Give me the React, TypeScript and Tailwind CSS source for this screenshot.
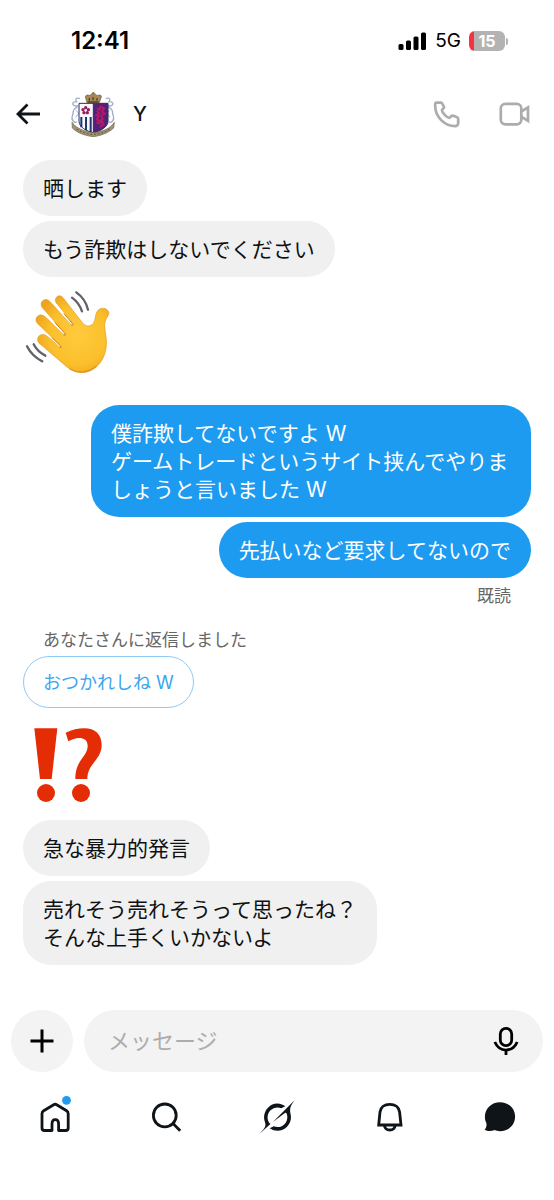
import React from "react";

type Message = { lines: string[] };

const received: Message[] = [
  { lines: ["晒します"] },
  { lines: ["もう詐欺はしないでください"] },
];

const sent: Message[] = [
  { lines: ["僕詐欺してないですよ W", "ゲームトレードというサイト挟んでやりましょうと言いました W"] },
  { lines: ["先払いなど要求してないので"] },
];

const latest: Message[] = [
  { lines: ["急な暴力的発言"] },
  { lines: ["売れそう売れそうって思ったね？", "そんな上手くいかないよ"] },
];

function Bubble({ message, own = false }: { message: Message; own?: boolean }) {
  const tone = own ? "self-end bg-[#1d9bf0] text-white" : "self-start bg-[#f0f0f0] text-[#0f1012]";
  return (
    <div className={`max-w-[440px] rounded-[28px] px-5 pt-[15px] pb-[13px] text-[21px] leading-7 ${tone}`}>
      {message.lines.map((line) => (
        <p key={line}>{line}</p>
      ))}
    </div>
  );
}

function StatusBar() {
  return (
    <div className="flex h-[82px] items-center justify-between pl-[71px] pr-[46px]">
      <time className="text-2xl font-semibold text-black">12:41</time>
      <div className="flex items-center">
        <svg className="mr-2 h-[18px] w-[29px]" viewBox="0 0 29 18" aria-label="電波">
          <rect x="0.5" y="12" width="5" height="6" rx="1.5" />
          <rect x="8" y="8.500" width="5" height="9.500" rx="1.500" />
          <rect x="15.500" y="4.500" width="5" height="13.500" rx="1.500" />
          <rect x="23" y="0.500" width="5" height="17.500" rx="1.500" />
        </svg>
        <span className="mr-2 text-[19px] leading-6 text-black">5G</span>
        <div className="flex items-center">
          <div className="flex h-5 w-9 items-center justify-center rounded-md bg-linear-to-r from-[#f8323c] from-15% to-[#b3b3b3] to-15% text-base font-bold leading-5 text-white">
            15
          </div>
          <span className="ml-px h-[7px] w-[2px] rounded-r-full bg-[#b3b3b3]" />
        </div>
      </div>
    </div>
  );
}

function Crest() {
  return (
    <svg className="h-[46px] w-[46px]" viewBox="32 32 138 138" role="img" aria-label="プロフィール画像">
      <g fill="none" stroke="#a3afc6" strokeWidth="4">
        <path d="M62 55C46 49 48 62 54 65C42 61 35 72 45 76C52 80 58 70 52 82C37 87 44 97 39 107C35 117 43 129 53 125" />
        <path d="M139 55C155 49 153 62 147 65C159 61 166 72 156 76C149 80 143 70 149 82C164 87 157 97 162 107C166 117 158 129 148 125" />
        <path d="M50 90l8 9-9 12M151 90l-8 9 9 12" strokeWidth="3" />
      </g>
      <path d="M59 69H102V157C80 151 59 141 59 122Z" fill="#f7f7fc" />
      <path d="M102 69H146V122C146 141 123 152 102 157Z" fill="#562078" />
      <path d="M66 110v31M80 110v40M94 110v45" stroke="#22376a" strokeWidth="6" />
      <path d="M59 69H146V122C146 141 123 152 102 157C81 152 59 141 59 122Z" fill="none" stroke="#252e66" strokeWidth="3" />
      <path d="M102 69V155" stroke="#342c69" strokeWidth="3" />
      <g fill="#9d175d">
        <circle cx="79" cy="82" r="5" /><circle cx="87" cy="88" r="5" />
        <circle cx="84" cy="97" r="5" /><circle cx="74" cy="97" r="5" />
        <circle cx="71" cy="88" r="5" />
      </g>
      <circle cx="79" cy="90" r="3" fill="#ece4ed" />
      <path d="M113 83l8 5 3-9 10 5-6 10 8 6-10 6 4 10-10 6-7-5 5-9-7-3 9-6-8-8M111 126l9 3 9-5 4 7-11 9" fill="none" stroke="#b71965" strokeWidth="6" />
      <path d="M83 67L78 50C79 43 87 43 92 46C93 38 110 38 113 46C119 43 127 43 126 50L120 67Z" fill="#a78a58" stroke="#70593c" strokeWidth="2" />
      <path d="M90 53v8M101 50v10M113 53v8M85 65H118" stroke="#51422e" strokeWidth="4" />
      <circle cx="102" cy="39" r="4" fill="#93764a" />
      <path d="M38 126C46 139 66 149 81 153C95 158 110 158 123 153C141 149 157 139 165 126L163 143C144 160 123 166 102 169C77 166 54 158 39 143Z" fill="#a3946e" stroke="#67604d" strokeWidth="2" />
      <path d="M52 146C71 158 86 162 102 162C119 162 137 156 151 146" fill="none" stroke="#5b543f" strokeWidth="3" strokeDasharray="6 5" />
    </svg>
  );
}

function Header() {
  return (
    <header className="flex h-16 items-center pl-4 pr-6">
      <button type="button" aria-label="戻る" className="mr-[30px]">
        <svg className="h-6 w-6" viewBox="0 0 24 24" fill="none" stroke="#0f1419" strokeWidth="2.8">
          <path d="M24 12H2.500M11.500 2.500L2 12L11.500 21.500" />
        </svg>
      </button>
      <Crest />
      <h1 className="ml-[17px] flex-1 text-xl font-medium leading-7 text-[#0f1419]">Y</h1>
      <button type="button" aria-label="音声通話" className="mr-[39px]">
        <svg className="h-[27px] w-[27px]" viewBox="0 0 27 27" fill="none" stroke="#acacac" strokeWidth="2.7" strokeLinejoin="round">
          <path d="M3.600 1.600H8.300C9 1.600 11.100 5.800 11.100 6.500C11.100 7.200 8.900 8.300 8.900 9C8.900 11.600 14.100 16.800 16.400 16.800C17.300 16.800 18 14.600 18.900 14.600C20.100 14.600 25.200 16.200 25.200 17.400V22C25.200 23.800 23.900 25.200 22.200 25.200C11.600 25.200 2.200 15.700 2.200 5V3.200C2.200 2.300 2.800 1.600 3.600 1.600Z" />
        </svg>
      </button>
      <button type="button" aria-label="ビデオ通話">
        <svg className="h-6 w-[31px]" viewBox="0 0 31 24" fill="none" stroke="#acacac" strokeWidth="2.7">
          <rect x="1.800" y="1.800" width="20.500" height="20.500" rx="4.500" />
          <path d="M22.500 9.300L29 5.300V18.800L22.500 14.800" />
        </svg>
      </button>
    </header>
  );
}

function WavingHand() {
  return (
    <svg className="mt-[13px] h-[84px] w-[90px]" viewBox="24 30 270 252" role="img" aria-label="手を振る">
      <defs>
        <radialGradient id="skin" gradientUnits="userSpaceOnUse" cx="190" cy="165" r="135">
          <stop offset="0" stopColor="#ffcb3c" />
          <stop offset="0.650" stopColor="#fbbf2c" />
          <stop offset="1" stopColor="#eda41d" />
        </radialGradient>
      </defs>
      <path
        d="M144 53L202 128C212 140 225 142 235 130C243 118 239 104 248 92C258 81 274 83 281 95C284 104 275 111 271 123C266 139 272 154 274 178C277 210 265 245 241 263C217 283 182 283 157 262L73 190C63 180 69 165 80 164C91 160 103 174 136 203C140 204 140 200 137 197L67 130C57 118 67 103 80 105C92 106 114 136 147 165C151 166 153 163 150 159L82 83C73 71 82 57 96 59C107 61 134 101 170 135C174 137 177 134 174 130L124 69C114 55 132 39 144 53Z"
        fill="url(#skin)"
        stroke="#e39a22"
        strokeWidth="2"
        strokeLinejoin="round"
      />
      <g fill="none" stroke="#d17f16" strokeWidth="3" strokeLinecap="round">
        <path d="M147 101L174 133Q175 137 170 135" />
        <path d="M120 128L150 161Q153 167 147 165" />
        <path d="M112 174L137 198Q140 204 135 203" />
        <path d="M164 267Q205 290 245 258" strokeWidth="2" />
      </g>
      <g fill="none" stroke="#626368" strokeWidth="7" strokeLinecap="round">
        <path d="M171 53Q192 68 201 94M184 37Q212 57 219 89M56 193Q67 215 91 227M36 199Q51 229 82 244" />
      </g>
    </svg>
  );
}

function Interrobang() {
  return (
    <svg className="mt-5 h-[75px] w-[90px]" viewBox="69 324 270 225" fill="#e42c05" role="img" aria-label="⁉️">
      <path d="M103 325H172L155 477H120Z" />
      <circle cx="138" cy="519" r="27" />
      <path d="M197 338C216 329 235 325 253 325C285 325 305 343 305 375C305 420 262 430 262 477H226C226 418 263 411 263 378C263 360 251 354 238 354C226 354 216 358 205 364Z" />
      <circle cx="243" cy="519" r="27" />
    </svg>
  );
}

function Composer() {
  return (
    <form className="flex h-[62px] gap-[11px] px-[11px]" onSubmit={(event) => event.preventDefault()}>
      <button type="button" aria-label="添付" className="flex w-[62px] shrink-0 items-center justify-center rounded-full bg-[#f3f3f3]">
        <svg className="h-6 w-6" viewBox="0 0 24 24" stroke="#000" strokeWidth="3">
          <path d="M12 0.500V23.500M0.500 12H23.500" />
        </svg>
      </button>
      <div className="flex min-w-0 flex-1 items-center rounded-full bg-[#f3f3f3] px-6">
        <input
          type="text"
          aria-label="メッセージ"
          placeholder="メッセージ"
          className="min-w-0 flex-1 bg-transparent text-[22px] leading-8 text-black outline-none placeholder:text-[#adadad]"
        />
        <button type="button" aria-label="音声入力">
          <svg className="h-[30px] w-[26px]" viewBox="0 0 26 30" fill="none" stroke="#000" strokeWidth="2.8">
            <rect x="7.300" y="2.400" width="11.400" height="17.200" rx="5.700" />
            <path d="M1.800 16C6.500 26.700 19.500 26.700 24.200 16M13 24V29" />
          </svg>
        </button>
      </div>
    </form>
  );
}

function Navigation() {
  const item = "flex items-center justify-center";
  return (
    <nav className="mt-[27px] grid grid-cols-5">
      <a href="#home" aria-label="ホーム" className={item}>
        <svg className="h-9 w-9 overflow-visible" viewBox="0 0 36 36" fill="none">
          <path d="M7.500 31.500H15V25C15 19.200 21.600 19.200 21.600 25V31.500H28.700C30.200 31.500 31.200 30.500 31.200 29V14.800C31.200 13.500 30.700 12.500 29.600 11.800L19.700 5.700C18.700 5.100 17.700 5.100 16.700 5.700L6.700 11.800C5.600 12.500 5 13.500 5 14.800V29C5 30.500 6 31.500 7.500 31.500Z" stroke="#0f1419" strokeWidth="2.800" strokeLinejoin="round" />
          <circle cx="29.500" cy="1.300" r="4.400" fill="#1d9bf0" />
        </svg>
      </a>
      <a href="#search" aria-label="検索" className={item}>
        <svg className="h-9 w-9" viewBox="0 0 36 36" fill="none" stroke="#0f1419" strokeWidth="2.800">
          <circle cx="16.800" cy="16.400" r="11.400" />
          <path d="M25 24.500L32.200 31.700" />
        </svg>
      </a>
      <a href="#grok" aria-label="Grok" className={item}>
        <svg className="h-9 w-9" viewBox="0 0 24 24" fill="#0f1419">
          <path d="M9.270 15.290l7.978-5.897c.391-.29.95-.177 1.137.272.98 2.369.542 5.215-1.410 7.169-1.951 1.954-4.667 2.382-7.149 1.406l-2.711 1.257c3.889 2.661 8.611 2.003 11.562-.953 2.341-2.344 3.066-5.539 2.388-8.420l.006.007c-.983-4.232.242-5.924 2.750-9.383.06-.082.12-.164.179-.248l-3.301 3.305v-.01L9.267 15.292M7.623 16.723c-2.792-2.670-2.310-6.801.071-9.184 1.761-1.763 4.647-2.483 7.166-1.425l2.705-1.250a7.808 7.808 0 0 0-1.829-1A8.975 8.975 0 0 0 5.984 5.830c-2.533 2.536-3.330 6.436-1.962 9.764 1.022 2.487-.653 4.246-2.340 6.022-.599.63-1.199 1.259-1.682 1.925l7.620-6.815" />
        </svg>
      </a>
      <a href="#notifications" aria-label="通知" className={item}>
        <svg className="h-9 w-9" viewBox="0 0 36 36" fill="none" stroke="#0f1419" strokeWidth="2.800">
          <path d="M8.700 26L10 13C10.600 8.200 14.400 5.300 19.800 5.300C25.200 5.300 29 8.200 29.600 13L31 26ZM14.500 27C15.500 32.300 24.100 32.300 25.100 27" />
        </svg>
      </a>
      <a href="#messages" aria-label="メッセージ一覧" className={item}>
        <svg className="h-9 w-9" viewBox="0 0 36 36" fill="#0f1419">
          <path d="M19 3.200C27.500 3.200 34.100 9.500 34.100 17.600C34.100 26 27.500 32.300 19 32.300C16.800 32.300 15.200 31.800 13.700 31.100C10.500 32.300 6.600 32.500 3.600 30.800C5.100 29 5.800 27.400 5.400 24.200C4.300 22.100 3.900 20 3.900 17.600C3.900 9.500 10.500 3.200 19 3.200Z" />
        </svg>
      </a>
    </nav>
  );
}

export default function App() {
  return (
    <div className="flex min-h-screen flex-col bg-white font-[Inter,'Noto_Sans_CJK_JP',sans-serif]" lang="ja">
      <StatusBar />
      <Header />
      <main className="flex flex-1 flex-col px-[23px] pt-[14px]">
        <section className="flex flex-col gap-[5px]">
          {received.map((message) => (
            <Bubble key={message.lines[0]} message={message} />
          ))}
        </section>
        <WavingHand />
        <section className="mt-[31px] flex flex-col gap-[5px]">
          {sent.map((message) => (
            <Bubble key={message.lines[0]} message={message} own />
          ))}
          <p className="self-end px-5 pt-px text-[17px] leading-6 text-[#666]">既読</p>
        </section>
        <section className="mt-5 flex flex-col items-start gap-1">
          <p className="px-5 text-[17px] leading-6 text-[#666]">あなたさんに返信しました</p>
          <p className="rounded-full border border-[#8fcaf5] px-[19px] pt-[14px] pb-3 text-lg leading-6 text-[#3ba6ee]">
            おつかれしね W
          </p>
        </section>
        <Interrobang />
        <section className="mt-[17px] flex flex-col gap-[5px]">
          {latest.map((message) => (
            <Bubble key={message.lines[0]} message={message} />
          ))}
        </section>
      </main>
      <footer className="pb-[65px] pt-5">
        <Composer />
        <Navigation />
      </footer>
    </div>
  );
}
